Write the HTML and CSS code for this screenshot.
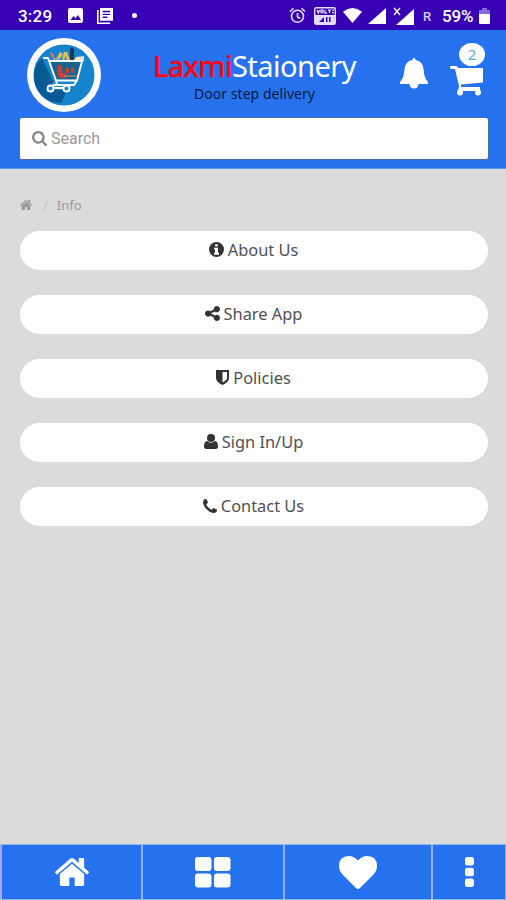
FILE: index.html
```html
<!DOCTYPE html>
<html lang="en">
<head>
<meta charset="utf-8">
<title>Laxmi Staionery</title>
<link rel="stylesheet" href="styles.css">
</head>
<body>
<div class="status">
  <span class="clock">3:29</span>
  <svg class="s-photo" width="15" height="15" viewBox="0 0 15 15"><rect width="15" height="15" rx="2"/><path fill="#3700b3" d="M2.500 12l3-4 2 2.300L10 7l3 5z"/></svg>
  <svg class="s-news" width="16" height="16" viewBox="0 0 17 17"><path d="M0 2h1.700v13.300H14V17H0z"/><path d="M3.200 0H17v13.500H3.200z"/><path stroke="#3700b3" stroke-width="1.400" d="M6 3.700h8M6 6.700h8M6 9.800h5"/></svg>
  <span class="dot"></span>
  <svg class="s-alarm" width="17" height="17" viewBox="0 0 17 17" fill="none" stroke="#e4dafa" stroke-width="1.600"><circle cx="8.500" cy="9.300" r="6"/><path d="M8.500 6v4l2.700 1.500M1 4.500L4.500 1.300M16 4.500l-3.500-3.200"/></svg>
  <svg class="s-volte" width="22" height="18" viewBox="0 0 22 18"><rect x=".7" y=".7" width="20.600" height="16.600" rx="1.500" fill="none" stroke="#e4dafa" stroke-width="1.400"/><path fill="#e4dafa" d="M1 8h20v9H1z"/><path fill="none" stroke="#e4dafa" stroke-width="1.300" d="M3 3l1.300 3L5.600 3M7 3.200h2v2.500H7zM11 3v3h2M14 3.200h3M15.500 3v3M18 3.200h2M18 5.700h2"/><path fill="#3700b3" d="M5 15l5-5v5zM12 10h1.500v5H12zM15 10h1.500v5H15z"/></svg>
  <svg class="s-wifi" width="19" height="15" viewBox="0 0 19 15"><path d="M0 3.700Q9.500-3.700 19 3.700L9.500 15z"/></svg>
  <svg class="s-sig" width="18" height="16" viewBox="0 0 18 16"><path d="M18 0v16H0z"/></svg>
  <svg class="s-sigx" width="21" height="18" viewBox="0 0 21 18"><path d="M21 2v16H3z"/><path stroke="#fff" stroke-width="1.300" d="M1 1l6 7M7 1L1 8"/></svg>
  <span class="roam">R</span>
  <span class="percent">59%</span>
  <svg class="s-bat" width="11" height="16" viewBox="0 0 11 16"><path fill="#8b69d3" d="M3 0h5v2h3v5H0V2h3z"/><path d="M0 6h11v9q0 1-1 1H1q-1 0-1-1z"/></svg>
</div>
<header class="header">
  <div class="brandbar">
    <svg class="logo" width="74" height="74" viewBox="0 0 74 74">
      <circle cx="37" cy="37" r="37" fill="#fff"/><circle cx="37" cy="37" r="30.500" fill="#1684cc"/>
      <path fill="#075b94" d="M15 20L26 43 22 51 40 53 34 65Q22 65 14 57 6 48 7 36 8 26 15 20z"/>
      <path fill="#e1bd58" d="M28 23l5-9 3 2-5 8zM34 25l3-11h3l4 11h-3l-2.500-7-2 7z"/>
      <path fill="#15395c" d="M43 11l2-2 2 2v14h-4z"/><path fill="#c87873" d="M23 15l2-1 5 10h-3z"/>
      <path fill="#f3dfc4" d="M49 19l8-1v5H46z"/><path fill="#5fb6dc" d="M27 21l3-2 4 5h-6z"/>
      <path fill="#1c648f" d="M23 24h32l-5 18H28z"/><path fill="#d73831" d="M31 27h4v8h4v5h-6q-4-4-2-13zM39 30h3v5h-3zM44 30h3v5h-3z"/>
      <path stroke="#b98361" stroke-width="1.300" d="M37 38h14"/>
      <path fill="none" stroke="#fff" stroke-width="1.900" stroke-linejoin="round" stroke-linecap="round" d="M17 20h4l8 22.500H50M22 23h33l-5 19.500L47 47H27l-3 3M29 42.500l1 4M26 50h11"/>
      <g fill="#1684cc" stroke="#fff" stroke-width="1.900"><circle cx="23.500" cy="50.500" r="3"/><circle cx="39.500" cy="50.500" r="3"/></g>
    </svg>
    <div class="brand">
      <h1><span class="red">Laxmi</span><span class="rest">Staionery</span></h1>
      <p>Door step delivery</p>
    </div>
    <svg class="bell" width="28" height="31" viewBox="0 0 28 31"><path d="M12.300 2Q12.500 0 14 0t1.700 2q7.300 1.300 8 10 .3 8 4.300 12v2H18.500q-.5 4.500-4.500 4.500T9.500 26H0v-2q4-4 4.300-12 .7-8.700 8-10z"/></svg>
    <div class="cart">
      <svg width="34" height="30" viewBox="0 0 34 30"><path d="M0 0h6.500l1.700 2H33v14.500L11 18.500v2.500h19v4H8L9 20 5 3H1Q0 3 0 0z"/><circle cx="10" cy="26.500" r="3"/><circle cx="28" cy="26.500" r="3"/></svg>
      <span class="badge">2</span>
    </div>
  </div>
  <div class="search">
    <svg width="15" height="15" viewBox="0 128 1664 1664"><path d="M1152 832q0-185-131.500-316.500t-316.500-131.500-316.500 131.500-131.500 316.500 131.500 316.500 316.500 131.500 316.500-131.500 131.500-316.500zm512 832q0 52-38 90t-90 38q-54 0-90-38l-343-342q-179 124-399 124-143 0-273.500-55.500t-225-150-150-225-55.500-273.500 55.500-273.500 150-225 225-150 273.500-55.500 273.500 55.500 225 150 150 225 55.500 273.500q0 220-124 399l343 343q37 37 37 90z"/></svg>
    <span>Search</span>
  </div>
</header>
<main class="main">
  <nav class="crumbs">
    <svg width="12" height="10" viewBox="89 253 1614 1284" preserveAspectRatio="none"><use href="#house"/></svg>
    <span class="slash">/</span><span class="here">Info</span>
  </nav>
  <div class="menu">
    <a class="item about"><svg width="15" height="15" viewBox="0 0 15 15"><circle cx="7.500" cy="7.500" r="7.500"/><path fill="#fff" d="M6.200 2.200h2.600v2.200H6.200zM5 5.700h4v5h1v2H5v-2h1V7.500H5z"/></svg><span>About Us</span></a>
    <a class="item share"><svg width="15" height="15" viewBox="128 128 1536 1536"><path d="M1344 1024q133 0 226.500 93.500t93.500 226.500-93.500 226.500-226.500 93.500-226.500-93.500-93.500-226.500q0-12 2-34l-360-180q-92 86-218 86-133 0-226.500-93.500t-93.500-226.500 93.500-226.500 226.500-93.500q126 0 218 86l360-180q-2-22-2-34 0-133 93.500-226.500t226.500-93.500 226.500 93.500 93.500 226.500-93.500 226.500-226.500 93.500q-126 0-218-86l-360 180q2 22 2 34t-2 34l360 180q92-86 218-86z"/></svg><span>Share App</span></a>
    <a class="item policies"><svg width="13" height="15" viewBox="0 0 13 15"><path fill-rule="evenodd" d="M0 0h13v8q0 4-6.500 7Q0 12 0 8zM6.500 2v10.500Q11 10.200 11 8V2z"/></svg><span>Policies</span></a>
    <a class="item sign"><svg width="14" height="15" viewBox="0 0 14 15"><circle cx="7" cy="4" r="4"/><path d="M3 7q4 3.500 8 0 3 .5 3 5.500 0 2.500-2.500 2.500h-9Q0 15 0 12.500 0 7.500 3 7z"/></svg><span>Sign In/Up</span></a>
    <a class="item contact"><svg width="14" height="14" viewBox="192 128 1408 1408"><path d="M1600 1240q0 27-10 70.500t-21 68.500q-21 50-122 106-94 51-186 51-27 0-53-3.500t-57.500-12.500-47-14.500-55.500-20.500-49-18q-98-35-175-83-127-79-264-216t-216-264q-48-77-83-175-3-9-18-49t-20.500-55.500-14.500-47-12.500-57.500-3.500-53q0-92 51-186 56-101 106-122 25-11 68.500-21t70.500-10q14 0 21 3 18 6 53 76 11 19 30 54t35 63.500 31 53.500q3 4 17.500 25t21.500 35.500 7 28.500q0 20-28.500 50t-62 55-62 53-28.500 46q0 9 5 22.500t8.500 20.500 14 24 11.500 19q76 137 174 235t235 174q2 1 19 11.500t24 14 20.500 8.500 22.500 5q18 0 46-28.500t53-62 55-62 50-28.500q14 0 28.500 7t35.500 21.500 25 17.500q25 15 53.500 31t63.500 35 54 30q70 35 76 53 3 7 3 21z"/></svg><span>Contact Us</span></a>
  </div>
</main>
<nav class="tabs">
  <a><svg width="34" height="28" viewBox="89 253 1614 1284" preserveAspectRatio="none"><path id="house" d="M1472 992v480q0 26-19 45t-45 19h-384v-384h-256v384h-384q-26 0-45-19t-19-45v-480q0-1 .5-3t.5-3l575-474 575 474q1 2 1 6zm223-69l-62 74q-8 9-21 11h-3q-13 0-21-7l-692-577-692 577q-12 8-24 7-13-2-21-11l-62-74q-8-10-7-23.500t11-21.500l719-599q32-26 76-26t76 26l244 204v-195q0-14 9-23t23-9h192q14 0 23 9t9 23v408l219 182q10 8 11 21.500t-7 23.500z"/></svg></a>
  <a><svg width="36" height="31" viewBox="0 0 36 31"><rect width="16.500" height="14" rx="3"/><rect x="19" width="16.500" height="14" rx="3"/><rect y="16.500" width="16.500" height="14" rx="3"/><rect x="19" y="16.500" width="16.500" height="14" rx="3"/></svg></a>
  <a><svg width="38" height="33" viewBox="0 0 38 33"><path d="M19 33Q18 33 17 32L4 19Q0 15 0 10 0 0 10 0q5 0 9 4.500Q23 0 28 0q10 0 10 10 0 5-4 9L21 32q-1 1-2 1z"/></svg></a>
  <a><svg width="9" height="30" viewBox="0 0 9 30"><rect width="9" height="8.500" rx="2.300"/><rect y="10.700" width="9" height="8.500" rx="2.300"/><rect y="21.500" width="9" height="8.500" rx="2.300"/></svg></a>
</nav>
</body>
</html>
```

FILE: styles.css
```css
* { box-sizing: border-box; }
body {
  margin: 0;
  height: 900px;
  display: flex;
  flex-direction: column;
  background: #dbdbdb;
  font-family: "Noto Sans", sans-serif;
  overflow: hidden;
}
svg { display: block; flex: none; fill: currentColor; }
span { white-space: nowrap; }

.status {
  height: 30px;
  flex: none;
  display: flex;
  align-items: center;
  padding: 1px 16px 0 18px;
  background: #3700b3;
  color: #fff;
  font-family: Roboto, sans-serif;
  font-weight: 500;
  font-size: 17px;
}
.clock { width: 50px; letter-spacing: .2px; }
.s-news { margin-left: 14px; }
.dot { width: 5px; height: 5px; margin-left: 19px; border-radius: 50%; background: #fff; }
.s-alarm { margin-left: auto; color: transparent; }
.s-volte { margin-left: 8px; }
.s-wifi { margin-left: 7px; }
.s-sig { margin-left: 6px; }
.s-sigx { margin-left: 7px; }
.roam { margin-left: 9px; width: 10px; font-size: 13px; padding-top: 2px; color: #d9cdf4; }
.percent { margin-left: 9px; width: 33px; font-size: 17px; letter-spacing: -.1px; }
.s-bat { margin-left: 4px; }

.header { height: 139px; flex: none; background: #2672ee; border-bottom: 1px solid #5e91e8; }
.brandbar { height: 87px; display: flex; padding: 8px 22px 0 27px; color: #fff; }
.brand { width: 203px; margin-left: 52px; text-align: center; }
.brand h1 {
  margin: 8px 0 0;
  height: 40px;
  font-size: 29px;
  line-height: 40px;
  font-weight: 400;
  letter-spacing: -.5px;
  display: flex;
}
.red { color: #f30718; -webkit-text-stroke: .7px #f30718; }
.brand p { margin: -1px 0 0; font-size: 14px; line-height: 18px; letter-spacing: .05px; color: #071b3c; }
.bell { margin: 20px 0 0 44px; }
.cart { position: relative; margin: 28px 0 0 22px; }
.badge {
  position: absolute;
  left: 9px;
  top: -23px;
  width: 26px;
  height: 23px;
  border-radius: 50%;
  background: #fff;
  color: #5bb0c9;
  font-size: 15px;
  line-height: 22px;
  text-align: center;
}
.search {
  height: 43px;
  margin: 0 17px 0 19px;
  padding-left: 12px;
  display: flex;
  align-items: center;
  gap: 4px;
  border: 1px solid #496da8;
  border-radius: 3px;
  background: #fff;
  color: #888;
}
.search span { font: 16px Roboto, sans-serif; color: #999; }

.main { flex: 1; padding: 26px 18px 0 20px; }
.crumbs { display: flex; align-items: center; height: 20px; color: #999; font-size: 13px; }
.slash { margin-left: 11px; color: #c4c4c4; }
.here { margin-left: 9px; }
.menu { display: flex; flex-direction: column; gap: 25px; margin-top: 16px; }
.item {
  height: 39px;
  display: flex;
  align-items: center;
  justify-content: center;
  gap: 4px;
  padding: 0 1px 2px 0;
  border-radius: 20px;
  background: #fff;
  color: #333;
  font-size: 16.4px;
}
.item span { color: #505050; }

.tabs {
  height: 57px;
  flex: none;
  display: grid;
  grid-template-columns: 139px 140px 146px 72px;
  gap: 2px;
  padding: 1px 1px 1px 2px;
  background: #91b4ea;
  border-top: 1px solid #dbdbdb;
}
.tabs a { display: flex; align-items: center; justify-content: center; background: #2672ee; color: #fff; }
```
